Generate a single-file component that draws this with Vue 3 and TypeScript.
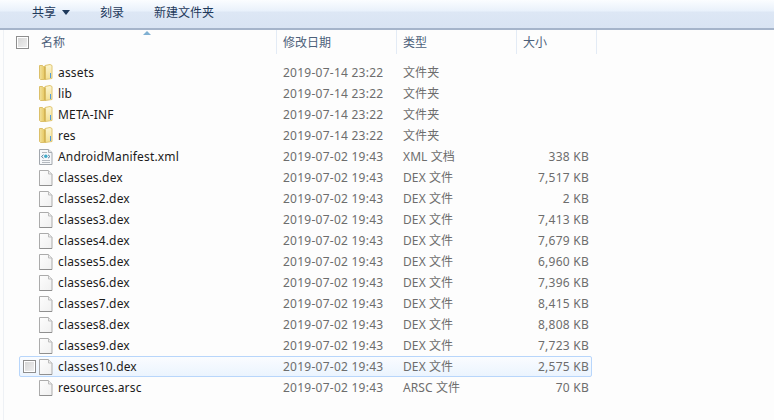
<script setup lang="ts">
interface Row { name: string; date: string; type: string; size: string; kind: 'folder' | 'xml' | 'file' }
const d1 = '2019-07-14 23:22'
const d2 = '2019-07-02 19:43'
const rows: Row[] = [
  { name: 'assets', date: d1, type: '文件夹', size: '', kind: 'folder' },
  { name: 'lib', date: d1, type: '文件夹', size: '', kind: 'folder' },
  { name: 'META-INF', date: d1, type: '文件夹', size: '', kind: 'folder' },
  { name: 'res', date: d1, type: '文件夹', size: '', kind: 'folder' },
  { name: 'AndroidManifest.xml', date: d2, type: 'XML 文档', size: '338 KB', kind: 'xml' },
  { name: 'classes.dex', date: d2, type: 'DEX 文件', size: '7,517 KB', kind: 'file' },
  { name: 'classes2.dex', date: d2, type: 'DEX 文件', size: '2 KB', kind: 'file' },
  { name: 'classes3.dex', date: d2, type: 'DEX 文件', size: '7,413 KB', kind: 'file' },
  { name: 'classes4.dex', date: d2, type: 'DEX 文件', size: '7,679 KB', kind: 'file' },
  { name: 'classes5.dex', date: d2, type: 'DEX 文件', size: '6,960 KB', kind: 'file' },
  { name: 'classes6.dex', date: d2, type: 'DEX 文件', size: '7,396 KB', kind: 'file' },
  { name: 'classes7.dex', date: d2, type: 'DEX 文件', size: '8,415 KB', kind: 'file' },
  { name: 'classes8.dex', date: d2, type: 'DEX 文件', size: '8,808 KB', kind: 'file' },
  { name: 'classes9.dex', date: d2, type: 'DEX 文件', size: '7,723 KB', kind: 'file' },
  { name: 'classes10.dex', date: d2, type: 'DEX 文件', size: '2,575 KB', kind: 'file' },
  { name: 'resources.arsc', date: d2, type: 'ARSC 文件', size: '70 KB', kind: 'file' },
]
</script>

<template>
  <div class="win">
    <div class="toolbar">
      <span class="tool share">共享<i class="caret"></i></span>
      <span class="tool burn">刻录</span>
      <span class="tool">新建文件夹</span>
    </div>
    <div class="body">
      <div class="head">
        <span class="sort"></span>
        <div class="hname"><span class="cb"></span><span class="label">名称</span></div>
        <div class="hcol">修改日期</div>
        <div class="hcol">类型</div>
        <div class="hcol">大小</div>
      </div>
      <div class="list">
        <div v-for="r in rows" :key="r.name" class="row" :class="{ hot: r.name === 'classes10.dex' }">
          <div class="name">
            <span class="slot"><span v-if="r.name === 'classes10.dex'" class="cb"></span></span>
            <svg v-if="r.kind === 'folder'" class="ico up" width="14" height="16" viewBox="0 0 14 16">
              <defs>
                <linearGradient id="fl" x1="0" y1="0" x2="1" y2="0">
                  <stop offset="0" stop-color="#f3e3a0" />
                  <stop offset="1" stop-color="#e7c860" />
                </linearGradient>
                <linearGradient id="fr" x1="0" y1="0" x2="0" y2="1">
                  <stop offset="0" stop-color="#fcf6d2" />
                  <stop offset="1" stop-color="#f3df92" />
                </linearGradient>
              </defs>
              <path d="M.5 1.500h3l1 1h1v13h-4l-1-1z" fill="url(#fl)" stroke="#dcc06a" />
              <path d="M6 1.500l5-1 2 1v13l-7 1z" fill="url(#fr)" stroke="#e0c673" />
              <path d="M5.500 2.500h1v13h-1z" fill="#c9a63e" />
              <path d="M11 9h1v5h-1z" fill="#4f9bd8" />
            </svg>
            <svg v-else-if="r.kind === 'xml'" class="ico" width="14" height="16" viewBox="0 0 14 16">
              <path d="M.5 .5h9l3.500 3v12h-12.500z" fill="#f6f8fa" stroke="#a2a7ad" />
              <path d="M9.500 .5v3h3.500" fill="#e6e9ec" stroke="#a8adb3" />
              <path d="M3 3.500h5M3 11.500h8M3 13.500h8" stroke="#b4b9bf" />
              <path d="M2.500 7.500l2-1.700M2.500 7.500l2 1.700M11 7.500l-2-1.700M11 7.500l-2 1.700" stroke="#5c7f9c" />
              <circle cx="6.800" cy="7.300" r="1.700" fill="#3fa9c9" />
            </svg>
            <svg v-else class="ico" width="14" height="16" viewBox="0 0 14 16">
              <defs>
                <linearGradient id="pg" x1="0" y1="0" x2="1" y2="1">
                  <stop offset="0" stop-color="#fdfdfd" />
                  <stop offset="1" stop-color="#f0f0f0" />
                </linearGradient>
              </defs>
              <path d="M.5 .5h9l3.500 3.500v11.500h-12.500z" fill="url(#pg)" stroke="#ababab" />
              <path d="M.5 15.500h12.500" stroke="#8f8f8f" />
              <path d="M9.500 .5v3.500h3.500" fill="#ededed" stroke="#bdbdbd" />
            </svg>
            <span class="nm">{{ r.name }}</span>
          </div>
          <div class="date">{{ r.date }}</div>
          <div class="type">{{ r.type }}</div>
          <div class="size">{{ r.size }}</div>
        </div>
      </div>
    </div>
  </div>
</template>

<style>
html, body { margin: 0; background: #fdfdfd; }
</style>

<style scoped>
.win {
  width: 774px;
  height: 420px;
  overflow: hidden;
  background: #fdfdfd;
  font: 12px "Noto Sans", "Noto Sans CJK SC", sans-serif;
  color: #6d6d6d;
}
.toolbar {
  height: 30px;
  box-sizing: border-box;
  display: flex;
  align-items: center;
  padding: 0 0 4px 32px;
  color: #1e395b;
  background: linear-gradient(#fbfdff 0, #e9f1fb 11px, #dde7f5 12px, #d9e4f3 27px);
  border-bottom: 2px solid #a5b4ca;
}
.tool { color: #1e395b; }
.share { display: flex; align-items: center; width: 68px; }
.burn { width: 54px; }
.caret {
  margin-left: 6px;
  border: 4px solid transparent;
  border-top: 5px solid #1e395b;
  border-bottom: 0;
}
.body { margin-left: 3px; border-left: 1px solid #eef1f5; height: 390px; }
.head {
  position: relative;
  height: 24px;
  display: grid;
  grid-template-columns: 273px 120px 120px 80px;
  color: #4c607a;
}
.hname, .hcol {
  display: flex;
  align-items: center;
  box-sizing: border-box;
  border-right: 1px solid #e3ebf5;
}
.hcol { padding-left: 6px; }
.hname { padding-left: 12px; }
.label { margin-left: 12px; }
.sort {
  position: absolute;
  left: 139px;
  top: 1px;
  border: 4px solid transparent;
  border-bottom: 4px solid #7fb0d2;
  border-top: 0;
}
.cb {
  display: block;
  width: 11px;
  height: 11px;
  border: 1px solid #8e8e8e;
  background: linear-gradient(135deg, #d4d4d4, #f2f2f2);
  box-shadow: inset 0 0 0 1px #fff;
}
.list { padding-top: 8px; }
.row {
  height: 21px;
  box-sizing: border-box;
  margin-left: 15px;
  width: 573px;
  padding-right: 2px;
  display: grid;
  grid-template-columns: 263px 120px 120px 66px;
  grid-template-rows: 19px;
  align-items: center;
  border: 1px solid transparent;
}
.hot {
  border-color: #b8d6fb;
  border-radius: 2px;
  background: linear-gradient(#fafcff, #ebf4fe);
}
.name { display: flex; align-items: center; line-height: 16px; }
.slot { width: 19px; padding-left: 3px; box-sizing: border-box; }
.ico { margin-right: 5px; flex: none; }
.up { margin-bottom: 2px; }
.nm { color: #1b1b1b; white-space: nowrap; letter-spacing: .16px; }
.type { white-space: nowrap; letter-spacing: .1px; line-height: 16px; }
.date { white-space: nowrap; letter-spacing: .25px; line-height: 16px; }
.size { text-align: right; white-space: nowrap; letter-spacing: .25px; line-height: 16px; }
</style>
